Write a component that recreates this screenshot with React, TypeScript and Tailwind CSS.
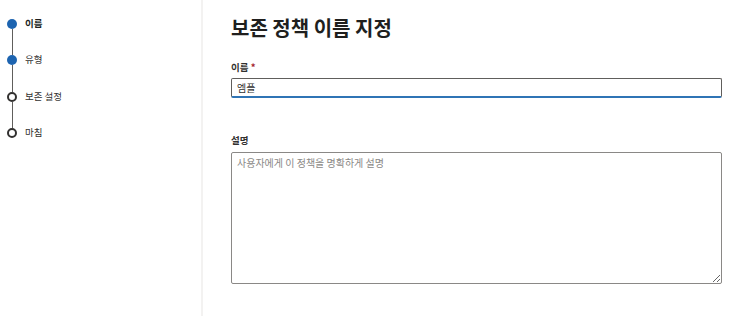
import React from "react";

const steps = [
  { label: "이름", done: true, current: true },
  { label: "유형", done: true, current: false },
  { label: "보존 설정", done: false, current: false },
  { label: "마침", done: false, current: false },
];

export default function App() {
  return (
    <div
      className="flex w-[732px] h-[316px] bg-white text-[#323130] overflow-hidden"
      style={{ fontFamily: '"Noto Sans CJK KR", "Noto Sans", sans-serif' }}
    >
      <aside className="w-[203px] shrink-0 border-r-2 border-[#f3f2f1] pt-[19px] pl-[7px]">
        {steps.map((s, i) => (
          <div key={s.label}>
            <div className="flex items-center h-[10px]">
              <div
                className={
                  s.done
                    ? "w-[10px] h-[10px] rounded-full bg-[#1d64b0]"
                    : "w-[10px] h-[10px] rounded-full border-2 border-[#323130] bg-white"
                }
              />
              <span
                className={
                  "ml-[8px] text-[9.5px] leading-none " +
                  (s.current ? "font-bold text-[#201f1e]" : "text-[#323130]")
                }
              >
                {s.label}
              </span>
            </div>
            {i < steps.length - 1 && (
              <div className={"ml-[4.5px] w-px bg-[#605e5c] " + (i === 1 ? "h-[27px]" : "h-[26px]")} />
            )}
          </div>
        ))}
      </aside>
      <main className="flex-1 pl-[28px] pr-[10px] pt-[15px]">
        <h1 className="text-[20px] leading-[26px] font-bold text-[#201f1e]">
          보존 정책 이름 지정
        </h1>
        <div className="mt-[20px] text-[9.5px] leading-[13px] font-bold text-[#323130]">
          이름 <span className="text-[#a4262c]">*</span>
        </div>
        <div className="mt-[4px] w-[491px] h-[20px] rounded-[2px] border border-[#605e5c] border-b-2 border-b-[#2f74b5] flex items-center px-[5px] text-[10px] text-[#323130]">
          엠플
        </div>
        <div className="mt-[36px] text-[9.5px] leading-[13px] font-bold text-[#323130]">설명</div>
        <textarea
          className="mt-[5px] block w-[491px] h-[132px] rounded-[2px] border border-[#8a8886] px-[5px] py-[3px] text-[10px] leading-[14px] text-[#323130] placeholder:text-[#8a8886] outline-none resize-y"
          placeholder="사용자에게 이 정책을 명확하게 설명"
          style={{ fontFamily: '"Noto Sans CJK KR", "Noto Sans", sans-serif' }}
        />
      </main>
    </div>
  );
}
